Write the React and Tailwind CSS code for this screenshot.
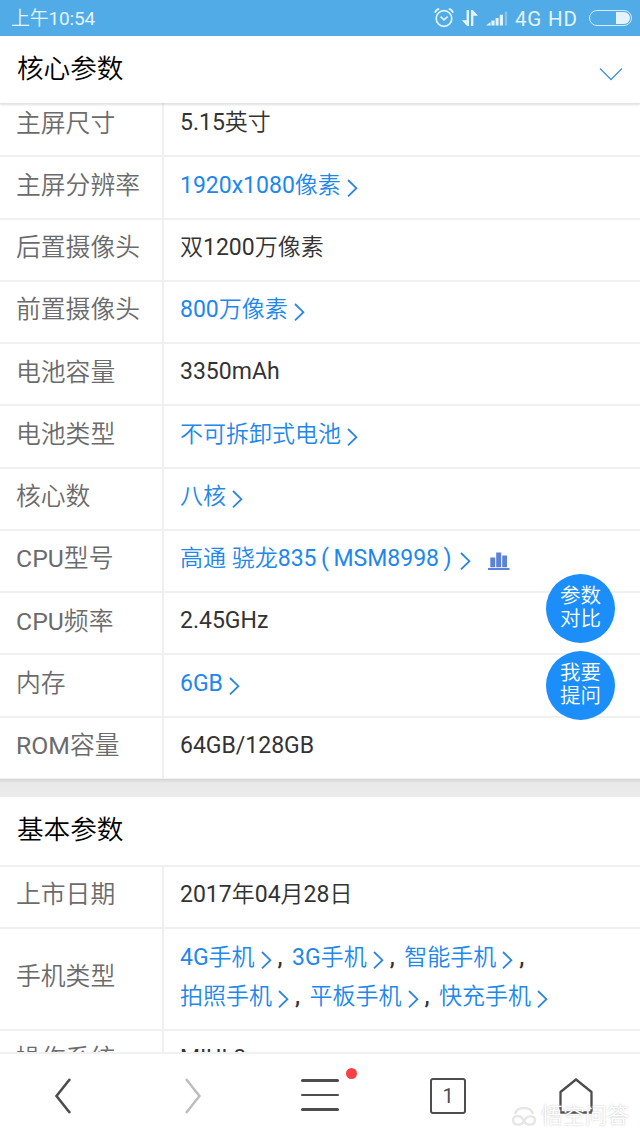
import React from 'react';

const coreSpecs = [
  { label: '主屏尺寸', value: '5.15英寸' },
  { label: '主屏分辨率', value: '1920x1080像素', link: true },
  { label: '后置摄像头', value: '双1200万像素' },
  { label: '前置摄像头', value: '800万像素', link: true },
  { label: '电池容量', value: '3350mAh' },
  { label: '电池类型', value: '不可拆卸式电池', link: true },
  { label: '核心数', value: '八核', link: true },
  { label: 'CPU型号', value: '高通 骁龙835', model: 'MSM8998', link: true, chart: true },
  { label: 'CPU频率', value: '2.45GHz' },
  { label: '内存', value: '6GB', link: true },
  { label: 'ROM容量', value: '64GB/128GB' },
];

const phoneTypes = [
  ['4G手机', '3G手机', '智能手机'],
  ['拍照手机', '平板手机', '快充手机'],
];

const Arrow = () => (
  <svg className="ml-[6px] mt-[5px] h-[19px] w-[12px] shrink-0" viewBox="0 0 12 19" fill="none" stroke="#2b86e0" strokeWidth="1.8">
    <path d="M1 1L9.4 9.2L1 17.4" />
  </svg>
);

const ChartIcon = () => (
  <svg className="ml-[16px] mt-[3px] h-[20px] w-[22px]" viewBox="0 0 22 20" fill="#5b82d8">
    <path d="M2.3 6.5h4.9v9.8H2.3zM8.2 1.5h5v14.8h-5zM14.2 4.5H19v11.8h-4.8zM0 17h21.5v2H0z" />
  </svg>
);

const StatusBar = () => (
  <div className="flex h-9 shrink-0 items-center bg-[#51abe6] pl-[11px] pr-[8px] text-[19px] text-[#e3f4ff]">
    <span className="flex-1 pt-[2px] tracking-[-0.2px]">上午10:54</span>
    <svg className="h-[20px] w-[20px]" viewBox="0 0 20 20" fill="none" stroke="currentColor" strokeWidth="1.7">
      <circle cx="10" cy="10.5" r="7.8" />
      <path d="M1 4.7C1.6 2.7 3 1.4 5.2 .9M19 4.7C18.4 2.7 17 1.4 14.8 .9M6.6 8.7L10 11.8L13.6 8.7" />
    </svg>
    <svg className="ml-[7px] h-[18px] w-[18px]" viewBox="0 0 18 18" fill="currentColor">
      <path d="M5.6 1H8v16H6.2L.8 11.2h4.8zM10 17V1h1.8l5.2 5.8h-4.6V17z" />
    </svg>
    <svg className="ml-[7px] h-[16px] w-[22px]" viewBox="0 0 22 16" fill="currentColor">
      <path d="M0 15.5L4.6 12V15.5zM5.4 10.6h3.2v4.9H5.4zM9.6 8h3v7.5h-3zM13.8 4.8h3.2v10.7h-3.2z" />
      <path d="M18.8 1.5h2.4v14h-2.4z" opacity=".35" />
    </svg>
    <span className="ml-[7px] w-[74px] whitespace-nowrap pt-[2px] text-[20.5px] tracking-[0.8px]">4G HD</span>
    <div className="flex h-[16px] w-[43px] items-center justify-end rounded-full border-[1.5px] border-[#d6efff] p-[1px]">
      <div className="h-full w-[14px] rounded-r-full bg-[#e3f4ff]" />
    </div>
  </div>
);

const SpecRow = ({ label, className = 'h-[62.25px] border-b-2', children }) => (
  <div className={`flex shrink-0 border-[#f0f0f0] ${className}`}>
    <div className="flex w-[164px] shrink-0 items-center border-r-2 border-[#f0f0f0] pb-[4px] pl-[16px] text-[24.8px] text-[#6b6b6b]">
      {label}
    </div>
    <div className="flex flex-1 flex-col justify-center pb-[3px] pl-[16px] text-[23px] text-[#333]">{children}</div>
  </div>
);

const SpecValue = ({ value, model, link, chart }) => (
  <div className={`flex items-center whitespace-pre ${link ? 'text-[#2087ec]' : ''}`}>
    <span>{value}</span>
    {model && (
      <>
        <span className="w-[17px] text-center">(</span>
        <span>{model}</span>
        <span className="-mr-[2px] w-[17px] text-center">)</span>
      </>
    )}
    {link && <Arrow />}
    {chart && <ChartIcon />}
  </div>
);

const SectionTitle = ({ children }) => (
  <h2 className="pb-[1px] text-[26.6px] leading-none text-black">{children}</h2>
);

const RoundButton = ({ lines }) => (
  <button className="flex h-[69px] w-[69px] flex-col items-center justify-center rounded-full bg-[#1c8ef9] pb-[2px] text-[20.5px] leading-[23px] text-white">
    {lines.map((line) => (
      <span key={line}>{line}</span>
    ))}
  </button>
);

const BottomBar = () => (
  <nav className="relative grid h-[86px] shrink-0 grid-cols-5 place-items-center border-t-2 border-[#f0f0f0] bg-white text-[#4d4d4d]">
    <svg className="h-[38px] w-[20px]" viewBox="0 0 20 38" fill="none" stroke="currentColor" strokeWidth="2.6">
      <path d="M16 2L2.5 19L16 36" />
    </svg>
    <svg className="h-[38px] w-[20px] text-[#bcbcbc]" viewBox="0 0 20 38" fill="none" stroke="currentColor" strokeWidth="2.4">
      <path d="M4 2L17.5 19L4 36" />
    </svg>
    <div className="relative -top-px flex w-[38px] flex-col gap-[12px]">
      <span className="h-[2.4px] rounded-full bg-current" />
      <span className="h-[2.4px] rounded-full bg-current" />
      <span className="h-[2.4px] rounded-full bg-current" />
      <i className="absolute -top-[11px] left-[45px] h-[11px] w-[11px] rounded-full bg-[#fb4144]" />
    </div>
    <div className="flex h-[36px] w-[36px] items-center justify-center rounded-[3px] border-2 border-current text-[20px]">1</div>
    <svg className="h-[36px] w-[34px]" viewBox="0 0 34 36" fill="none" stroke="currentColor" strokeWidth="2.3" strokeLinejoin="round">
      <path d="M1.5 14L17 1.5L32.5 14V34.5H1.5z" />
    </svg>
    <div className="absolute bottom-[10px] right-[11px] flex items-center gap-[4px] text-white [text-shadow:0_0_2px_#bbb]">
      <svg className="h-[24px] w-[26px]" viewBox="0 0 26 24" fill="none" stroke="#e6e6e6" strokeWidth="2.4">
        <path d="M4 10C6 2 20 2 22 10M13 17C10 10 2 11 2 16S10 23 13 17S24 11 24 16S16 23 13 17" />
      </svg>
      <span className="text-[22px] leading-none">悟空问答</span>
    </div>
  </nav>
);

const App = () => {
  return (
    <div className="relative flex h-[1138px] w-[640px] flex-col overflow-hidden bg-white font-['Roboto','Noto_Sans_CJK_SC_DemiLight','Noto_Sans_CJK_SC_Light','Noto_Sans_CJK_SC',sans-serif]">
      <StatusBar />
      <header className="z-10 flex h-[67px] shrink-0 items-center justify-between bg-white pl-[17px] pr-[17px] shadow-[0_2px_2px_rgba(0,0,0,0.12)]">
        <SectionTitle>核心参数</SectionTitle>
        <svg className="mt-[8px] h-[14px] w-[24px]" viewBox="0 0 24 14" fill="none" stroke="#3d93e0" strokeWidth="1.3">
          <path d="M1 1.5L12 12.5L23 1.5" />
        </svg>
      </header>

      <main className="flex min-h-0 flex-1 flex-col overflow-hidden">
        <div className="-mt-[8px] shrink-0">
          {coreSpecs.map((spec) => (
            <SpecRow key={spec.label} label={spec.label}>
              <SpecValue {...spec} />
            </SpecRow>
          ))}
        </div>
        <div className="-mt-px h-[18px] shrink-0 bg-gradient-to-b from-[#d6d6d6] via-[#e9e9e9] via-25% to-[#ebebeb]" />
        <div className="flex h-[70px] shrink-0 items-center border-b-2 border-[#f0f0f0] pl-[17px]">
          <SectionTitle>基本参数</SectionTitle>
        </div>
        <SpecRow label="上市日期" className="h-[62px] border-b-2">
          <SpecValue value="2017年04月28日" />
        </SpecRow>
        <SpecRow label="手机类型" className="h-[102px] border-b-2">
          {phoneTypes.map((line, i) => (
            <div key={i} className="flex h-[39px] items-center">
              {line.map((type, j) => (
                <React.Fragment key={type}>
                  <SpecValue value={type} link />
                  {!(i === 1 && j === 2) && <span className="w-[19.5px] pl-[5px] font-medium">,</span>}
                </React.Fragment>
              ))}
            </div>
          ))}
        </SpecRow>
        <SpecRow label="操作系统">
          <SpecValue value="MIUI 8" />
        </SpecRow>
      </main>

      <BottomBar />

      {/* floating actions over the spec table */}
      <div className="absolute left-[546px] top-[574px] z-20 flex flex-col gap-[8px]">
        <RoundButton lines={['参数', '对比']} />
        <RoundButton lines={['我要', '提问']} />
      </div>
    </div>
  );
};

export default App;
